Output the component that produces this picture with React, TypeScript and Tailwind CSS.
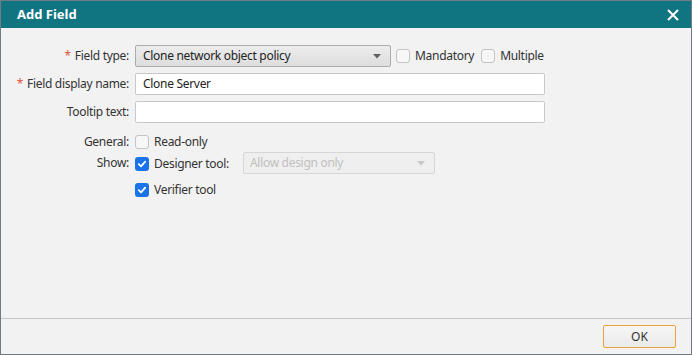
import React from "react";

function Check({ checked }: { checked?: boolean }) {
  if (checked) {
    return (
      <span className="w-[14px] h-[14px] rounded-[3px] bg-[#1a73e8] flex items-center justify-center shrink-0">
        <svg width="10" height="10" viewBox="0 0 10 10">
          <path d="M1.8 5.2 L4 7.4 L8.2 2.6" fill="none" stroke="#fff" strokeWidth="1.8" strokeLinecap="round" strokeLinejoin="round" />
        </svg>
      </span>
    );
  }
  return <span className="w-[14px] h-[14px] rounded-[3px] border border-[#c4c4c4] bg-[#f7f7f7] shrink-0" />;
}

function Arrow({ color }: { color: string }) {
  return (
    <svg width="8" height="5" viewBox="0 0 8 5">
      <path d="M0 0 L8 0 L4 4.5 Z" fill={color} />
    </svg>
  );
}

function Label({ children, required }: { children: React.ReactNode; required?: boolean }) {
  return (
    <div className="text-right text-[#333] whitespace-nowrap">
      {required && <span className="text-[#e0553d] mr-[4px]">*</span>}
      {children}
    </div>
  );
}

export default function App() {
  return (
    <div
      className="w-[692px] h-[355px] border border-[#6e7c86] bg-[#f2f2f2] flex flex-col text-[12px] leading-none tracking-[-0.3px]"
      style={{ fontFamily: '"Segoe UI", "Noto Sans", sans-serif' }}
    >
      {/* header */}
      <div className="h-[27px] bg-[#117481] flex items-center justify-between pl-[16px] pr-[12px] shrink-0">
        <span className="text-white font-bold text-[13px] tracking-normal">Add Field</span>
        <svg width="12" height="12" viewBox="0 0 12 12">
          <path d="M1 1 L11 11 M11 1 L1 11" stroke="#fff" strokeWidth="2" />
        </svg>
      </div>

      {/* body */}
      <div className="flex-1 pt-[17px]">
        <div className="grid grid-cols-[128px_1fr] gap-x-[6px] items-center">
          <Label required>Field type:</Label>
          <div className="flex items-center h-[22px]">
            <div className="w-[256px] h-[22px] rounded-[2px] border border-[#acacac] bg-gradient-to-b from-[#ececec] to-[#dedede] flex items-center justify-between pl-[7px] pr-[9px] text-[#222]">
              <span>Clone network object policy</span>
              <Arrow color="#606060" />
            </div>
            <div className="flex items-center ml-[5px] gap-[5px] text-[#333]">
              <Check />
              <span>Mandatory</span>
            </div>
            <div className="flex items-center ml-[7px] gap-[5px] text-[#333]">
              <Check />
              <span>Multiple</span>
            </div>
          </div>

          <div className="col-span-2 h-[6px]" />
          <Label required>Field display name:</Label>
          <div className="w-[410px] h-[22px] border border-[#c8c8c8] rounded-[2px] bg-white flex items-center pl-[7px] text-[#222]">
            Clone Server
          </div>

          <div className="col-span-2 h-[6px]" />
          <Label>Tooltip text:</Label>
          <div className="w-[410px] h-[22px] border border-[#c8c8c8] rounded-[2px] bg-white" />

          <div className="col-span-2 h-[12px]" />
          <Label>General:</Label>
          <div className="flex items-center gap-[5px] h-[14px] text-[#333]">
            <Check />
            <span>Read-only</span>
          </div>

          <div className="col-span-2 h-[3px]" />
          <Label>Show:</Label>
          <div className="flex items-center h-[22px] text-[#333]">
            <div className="flex items-center gap-[5px] pt-[1px]">
              <Check checked />
              <span>Designer tool:</span>
            </div>
            <div className="ml-[14px] w-[192px] h-[22px] rounded-[2px] border border-[#d6d6d6] bg-[#efefef] flex items-center justify-between pl-[6px] pr-[9px] text-[#c0c0c0]">
              <span>Allow design only</span>
              <Arrow color="#c8c8c8" />
            </div>
          </div>

          <div className="col-span-2 h-[9px]" />
          <div />
          <div className="flex items-center gap-[5px] h-[14px] text-[#333]">
            <Check checked />
            <span>Verifier tool</span>
          </div>
        </div>
      </div>

      {/* footer */}
      <div className="h-[36px] border-t border-[#c6c6c6] flex items-center justify-end pr-[15px] shrink-0">
        <button className="w-[73px] h-[23px] border border-[#e8a43c] rounded-[2px] bg-gradient-to-b from-[#f6f6f6] to-[#eaeaea] text-[#333] text-[12px] tracking-normal">
          OK
        </button>
      </div>
    </div>
  );
}
